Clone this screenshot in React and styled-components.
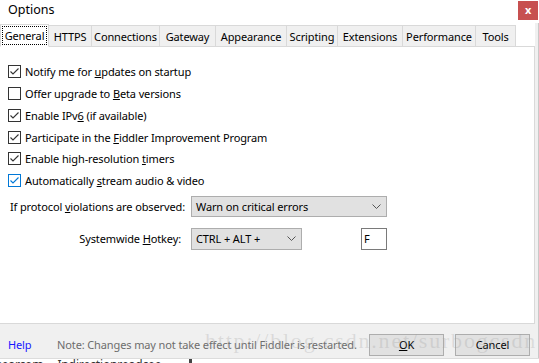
import React from "react";
import styled, { createGlobalStyle } from "styled-components";

const Global = createGlobalStyle`
  html, body { margin: 0; padding: 0; background: #fff; }
  body { font-family: "Noto Sans", "Open Sans", sans-serif; font-size: 11px; letter-spacing: -0.12px; color: #000; }
  * { box-sizing: border-box; }
`;

const Window = styled.div`
  position: relative;
  width: 539px;
  height: 363px;
  display: flex;
  flex-direction: column;
  overflow: hidden;
  background: #fff;
`;

const TitleBar = styled.div`
  height: 23px;
  display: flex;
  align-items: flex-start;
  justify-content: space-between;
  padding-left: 8px;
  padding-right: 1px;
  background: #fff;
`;

const Title = styled.div`
  font-size: 12.5px;
  letter-spacing: 0;
  line-height: 19px;
  color: #000;
`;

const CloseBtn = styled.div`
  width: 20px;
  height: 19px;
  margin-top: 1px;
  background: #c75050;
  color: #fff;
  display: flex;
  align-items: center;
  justify-content: center;
  font-size: 11px;
  font-weight: bold;
  line-height: 1;
  padding-bottom: 2px;
`;

const Body = styled.div`
  flex: 1;
  display: flex;
  flex-direction: column;
  border-right: 3px solid #f0f0f0;
  box-shadow: 1px 0 0 #c9c9c9;
  margin-right: 1px;
`;

const TabStrip = styled.div`
  height: 23px;
  display: flex;
  align-items: flex-end;
  background: #fff;
`;

const Tab = styled.div`
  width: ${(p) => p.$w}px;
  height: ${(p) => (p.$active ? "23px" : "21px")};
  display: flex;
  align-items: center;
  justify-content: center;
  background: ${(p) => (p.$active ? "#fff" : "#f0f0f0")};
  border: 1px solid #d9d9d9;
  border-bottom: ${(p) => (p.$active ? "1px solid #fff" : "none")};
  margin-left: ${(p) => (p.$first ? "0" : "-1px")};
  margin-bottom: ${(p) => (p.$active ? "-1px" : "0")};
  position: relative;
  z-index: ${(p) => (p.$active ? 1 : 0)};
  white-space: nowrap;
  flex: none;
`;

const FocusLabel = styled.span`
  outline: 1px dotted #000;
  outline-offset: 0px;
  padding: 0 2px;
  line-height: 17px;
`;

const Panel = styled.div`
  height: 278px;
  background: #fff;
  border-top: 1px solid #d9d9d9;
  border-right: 1px solid #d9d9d9;
  border-bottom: 1px solid #d9d9d9;
  padding: 14px 0 0 8px;
  display: flex;
  flex-direction: column;
`;

const CheckList = styled.div`
  display: flex;
  flex-direction: column;
`;

const CheckRow = styled.label`
  height: 21.75px;
  display: flex;
  align-items: center;
  gap: 4px;
  white-space: nowrap;
`;

const Box = styled.span`
  width: 13px;
  height: 13px;
  border: 1px solid ${(p) => (p.$focus ? "#0078d7" : "#333")};
  background: #fff;
  display: inline-flex;
  align-items: center;
  justify-content: center;
  flex: none;
`;

const U = styled.span`
  text-decoration: underline;
  text-underline-offset: 1px;
`;

const FormRow = styled.div`
  display: flex;
  align-items: center;
  margin-top: ${(p) => p.$mt}px;
`;

const Label = styled.div`
  width: ${(p) => p.$w}px;
  padding-right: ${(p) => p.$pr}px;
  text-align: right;
  white-space: nowrap;
  flex: none;
`;

const Select = styled.div`
  width: ${(p) => p.$w}px;
  height: ${(p) => p.$h}px;
  background: #e1e1e1;
  border: 1px solid #adadad;
  display: flex;
  align-items: center;
  justify-content: space-between;
  padding: 0 5px 0 4px;
  flex: none;
`;

const TextBox = styled.div`
  width: 26px;
  height: 22px;
  border: 1px solid #7a7a7a;
  background: #fff;
  margin-left: ${(p) => p.$ml}px;
  padding-left: 2px;
  display: flex;
  align-items: center;
`;

const Footer = styled.div`
  height: 34px;
  background: #f0f0f0;
  display: flex;
  align-items: center;
  padding-top: 7px;
  padding-left: 8px;
  padding-right: 5px;
  position: relative;
`;

const HelpLink = styled.span`
  color: #1616ff;
  width: 49px;
`;

const Note = styled.span`
  color: #6d6d6d;
  flex: 1;
  white-space: nowrap;
`;

const Button = styled.div`
  width: 75px;
  height: 22px;
  background: #e1e1e1;
  border: 1px solid #adadad;
  display: flex;
  align-items: center;
  justify-content: center;
  margin-left: ${(p) => p.$ml}px;
  position: relative;
  z-index: 2;
`;

const Watermark = styled.div`
  position: absolute;
  left: 205px;
  top: 4px;
  font-family: "Liberation Serif", serif;
  font-size: 22px;
  letter-spacing: 1.8px;
  color: rgba(160, 160, 160, 0.28);
  white-space: nowrap;
  pointer-events: none;
  z-index: 3;
`;

const UnderStrip = styled.div`
  flex: 1;
  background: #fff;
  overflow: hidden;
  position: relative;
  border-top: 1px solid #dcdcdc;
  display: flex;
  gap: 14px;
  align-items: flex-start;
`;

const UnderText = styled.span`
  font-size: 12px;
  line-height: 12px;
  color: #333;
  white-space: nowrap;
  margin-left: ${(p) => p.$ml}px;
`;

const UnderMark = styled.span`
  width: 3px;
  height: 6px;
  background: #444;
  margin-left: 14px;
`;

const Check = ({ color }) => (
  <svg width="11" height="11" viewBox="0 0 11 11">
    <path d="M1.5 5.5 L4 8 L9.5 2.5" fill="none" stroke={color} strokeWidth="1.1" />
  </svg>
);

const Chevron = () => (
  <svg width="9" height="5" viewBox="0 0 9 5">
    <path d="M0.5 0.5 L4.5 4.5 L8.5 0.5" fill="none" stroke="#555" strokeWidth="1" />
  </svg>
);

const tabs = [
  { t: "General", w: 49, active: true },
  { t: "HTTPS", w: 44 },
  { t: "Connections", w: 69 },
  { t: "Gateway", w: 57 },
  { t: "Appearance", w: 72 },
  { t: "Scripting", w: 52 },
  { t: "Extensions", w: 66 },
  { t: "Performance", w: 74 },
  { t: "Tools", w: 41 },
];

const items = [
  { on: true, label: <>Notify me for <U>u</U>pdates on startup</> },
  { on: false, label: <>Offer upgrade to <U>B</U>eta versions</> },
  { on: true, label: <>Enable IPv<U>6</U> (if available)</> },
  { on: true, label: <>Participate in the <U>F</U>iddler Improvement Program</> },
  { on: true, label: <>Enable high-resolution <U>t</U>imers</> },
  { on: true, focus: true, label: <>Automatically <U>s</U>tream audio &amp; video</> },
];

export default function App() {
  return (
    <>
      <Global />
      <Window>
        <TitleBar>
          <Title>Options</Title>
          <CloseBtn>x</CloseBtn>
        </TitleBar>
        <Body>
          <TabStrip>
            {tabs.map((tb, i) => (
              <Tab key={tb.t} $active={tb.active} $w={tb.w} $first={i === 0}>
                {tb.active ? <FocusLabel>{tb.t}</FocusLabel> : tb.t}
              </Tab>
            ))}
          </TabStrip>
          <Panel>
            <CheckList>
              {items.map((it, i) => (
                <CheckRow key={i}>
                  <Box $focus={it.focus}>
                    {it.on && <Check color={it.focus ? "#0078d7" : "#333"} />}
                  </Box>
                  <span>{it.label}</span>
                </CheckRow>
              ))}
            </CheckList>
            <FormRow $mt={4}>
              <Label $w={183} $pr={6}>If protocol <U>v</U>iolations are observed:</Label>
              <Select $w={196} $h={21}>
                <span>Warn on critical errors</span>
                <Chevron />
              </Select>
            </FormRow>
            <FormRow $mt={11}>
              <Label $w={183} $pr={10}>Systemwide <U>H</U>otkey:</Label>
              <Select $w={111} $h={22}>
                <span>CTRL + ALT +</span>
                <Chevron />
              </Select>
              <TextBox $ml={59}>F</TextBox>
            </FormRow>
          </Panel>
          <Footer>
            <HelpLink>Help</HelpLink>
            <Note>Note: Changes may not take effect until Fiddler is restarted.</Note>
            <Button $ml={0}><span><U>O</U>K</span></Button>
            <Button $ml={11}>Cancel</Button>
            <Watermark>http://blog.csdn.net/surbogcsdn</Watermark>
          </Footer>
        </Body>
        <UnderStrip>
          <UnderText $ml={-4}>searcom</UnderText>
          <UnderText $ml={0}>Indirectionreadcee</UnderText>
          <UnderMark />
        </UnderStrip>
      </Window>
    </>
  );
}
